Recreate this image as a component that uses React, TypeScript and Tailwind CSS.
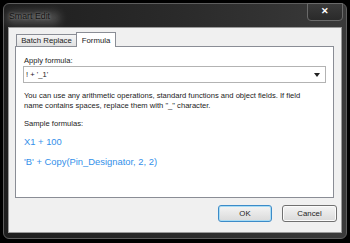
import React from "react";

const font = { fontFamily: '"Liberation Sans", Arial, sans-serif' };

export default function App() {
  return (
    <div
      className="w-[350px] h-[243px] bg-black pt-[3px] pl-[3px] pr-[3px] pb-[4px] overflow-hidden"
      style={font}
    >
      <div className="relative w-[344px] h-[236px] rounded-[6px] border border-[#5e5e5e] bg-linear-to-r from-[#1e1e1e] via-[#2a2a2a] to-[#3a3a3a] pl-[4px] pr-[4px] pt-[23px] pb-[5px] flex flex-col">
        {/* title glow */}
        <div className="absolute left-[2px] top-[8px] w-[54px] h-[12px] rounded-full bg-[rgba(255,255,255,0.22)] blur-[4px]" />
        {/* title */}
        <div className="absolute left-[5px] top-[7px] h-[12px] flex items-center text-[8.8px] text-[#141414] [text-shadow:0_0_3px_rgba(255,255,255,0.45)]">
          Smart Edit
        </div>
        {/* close button */}
        <div className="absolute right-[3px] top-[-1px] w-[36px] h-[18px] rounded-b-[4px] border border-[#6a6a6a] bg-linear-to-b from-[#3a3a3a] to-[#2a2a2a] flex items-center justify-center">
          <span className="text-[9px] font-bold text-white leading-none mt-[-1px]">✕</span>
        </div>
        {/* client area */}
        <div className="flex-1 bg-[#f0f0f0] border border-[#9a9a9a] flex flex-col pt-[4px]">
          {/* tabs */}
          <div className="flex items-end h-[14px] ml-[6px] pl-[1px] relative z-10">
            <div className="h-[12px] w-[61px] border border-b-0 border-[#8a8d95] bg-linear-to-b from-[#f5f5f5] to-[#e1e1e1] flex items-center justify-center text-[7.8px] text-[#222]">
              Batch Replace
            </div>
            <div className="h-[15px] mb-[-1px] w-[40px] ml-[-1px] border border-b-0 border-[#8a8d95] bg-white flex items-start pt-[2px] justify-center text-[7.8px] text-[#222]">
              Formula
            </div>
          </div>
          {/* panel */}
          <div className="ml-[6px] mr-[7px] h-[152px] border border-[#8a8d95] bg-white px-[7px] flex flex-col">
            <div className="mt-[9px] h-[10px] leading-[10px] pl-[1px] text-[7.6px] text-[#222]">Apply formula:</div>
            <div className="h-[17px] border border-[#b3b3b3] bg-white flex items-center justify-between pl-[2px] pr-[5px]">
              <span className="text-[7.6px] text-[#222]">! + '_1'</span>
              <svg width="6" height="4" viewBox="0 0 6 4">
                <polygon points="0,0 6,0 3,4" fill="#222" />
              </svg>
            </div>
            <div className="mt-[8px] pl-[1px] text-[7.6px] leading-[10px] text-[#222] whitespace-nowrap">
              <div>You can use any arithmetic operations, standard functions and object fields. If field</div>
              <div>name contains spaces, replace them with "_" character.</div>
            </div>
            <div className="mt-[8px] h-[10px] leading-[10px] pl-[1px] text-[7.6px] text-[#222]">Sample formulas:</div>
            <div className="mt-[7px] h-[12px] leading-[12px] pl-[1px] text-[9.4px] text-[#3390ea]">X1 + 100</div>
            <div className="mt-[8px] h-[12px] leading-[12px] pl-[1px] text-[9.4px] text-[#3390ea] whitespace-nowrap">
              'B' + Copy(Pin_Designator, 2, 2)
            </div>
          </div>
          {/* buttons */}
          <div className="mt-[7px] flex justify-end gap-[10px] mr-[4px]">
            <div className="w-[54px] h-[17px] rounded-[3px] border border-[#3c8bc8] bg-linear-to-b from-[#f4f4f4] to-[#dadada] flex items-center justify-center text-[7.8px] text-[#222] shadow-[inset_0_0_0_1px_#a8dcf5]">
              OK
            </div>
            <div className="w-[55px] h-[17px] rounded-[3px] border border-[#707070] bg-linear-to-b from-[#f4f4f4] to-[#dadada] flex items-center justify-center text-[7.8px] text-[#222] shadow-[inset_0_0_0_1px_#fbfbfb]">
              Cancel
            </div>
          </div>
        </div>
      </div>
    </div>
  );
}
